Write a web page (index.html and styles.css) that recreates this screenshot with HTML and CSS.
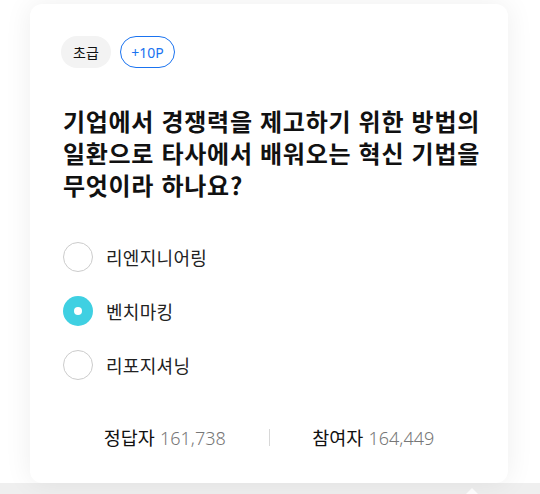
FILE: index.html
```html
<!DOCTYPE html>
<html lang="ko">
<head>
<meta charset="utf-8">
<link rel="stylesheet" href="styles.css">
</head>
<body>
<div class="page">
  <div class="card">
    <div class="chips">
      <span class="chip chip-level">초급</span>
      <span class="chip chip-point">+10P</span>
    </div>
    <h1 class="question">기업에서 경쟁력을 제고하기 위한 방법의 일환으로 타사에서 배워오는 혁신 기법을 무엇이라 하나요?</h1>
    <ul class="options">
      <li class="option"><span class="radio"></span><span class="label">리엔지니어링</span></li>
      <li class="option selected"><span class="radio"></span><span class="label">벤치마킹</span></li>
      <li class="option"><span class="radio"></span><span class="label">리포지셔닝</span></li>
    </ul>
    <div class="stats">
      <div class="stat"><span class="stat-name">정답자</span> <span class="stat-num">161,738</span></div>
      <div class="divider"></div>
      <div class="stat"><span class="stat-name">참여자</span> <span class="stat-num">164,449</span></div>
    </div>
  </div>
  <div class="strip"><span class="arrow"></span></div>
</div>
</body>
</html>
```

FILE: styles.css
```css
* { box-sizing: border-box; }
html, body { margin: 0; padding: 0; }
body {
  background: #ffffff;
  font-family: "Noto Sans CJK KR", "Noto Sans", sans-serif;
  color: #111;
  width: 540px;
  height: 494px;
  overflow: hidden;
}
.page {
  padding-top: 4px;
  position: relative;
  height: 494px;
  display: flex;
  flex-direction: column;
}
.card {
  position: relative;
  z-index: 1;
  margin-left: 30px;
  width: 478px;
  height: 479px;
  background: #fff;
  border-radius: 12px;
  box-shadow: 0 0 28px rgba(0, 0, 0, 0.07);
  padding: 32px 31px 0 31px;
}
.chips {
  display: flex;
  gap: 9px;
  height: 32px;
}
.chip {
  display: inline-flex;
  align-items: center;
  justify-content: center;
  height: 32px;
  border-radius: 16px;
  font-size: 14px;
}
.chip-level {
  width: 50px;
  background: #f3f3f3;
  color: #111;
}
.chip-point {
  width: 55px;
  border: 1px solid #1a73f0;
  color: #1a73f0;
  font-family: "Noto Sans", sans-serif;
  font-size: 14px;
}
.question {
  margin: 37px -14px 0 2px;
  font-size: 24px;
  line-height: 32px;
  font-weight: 700;
  color: #111;
  letter-spacing: 0.7px;
  word-break: keep-all;
}
.options {
  list-style: none;
  margin: 41px 0 0 2px;
  padding: 0;
  display: flex;
  flex-direction: column;
  gap: 24px;
}
.option {
  display: flex;
  align-items: center;
  height: 30px;
  gap: 13px;
}
.radio {
  width: 30px;
  height: 30px;
  border-radius: 50%;
  border: 1.5px solid #cccccc;
  flex: none;
  display: flex;
  align-items: center;
  justify-content: center;
}
.option.selected .radio {
  border: none;
  background: #3fd0e2;
}
.option.selected .radio::after {
  content: "";
  width: 8px;
  height: 8px;
  border-radius: 50%;
  background: #fff;
}
.label {
  font-size: 18px;
  letter-spacing: 0.3px;
  color: #222;
}
.stats {
  margin-top: 47px;
  display: flex;
  align-items: center;
  height: 20px;
}
.stat {
  flex: 1;
  text-align: center;
  font-size: 18.5px;
  white-space: nowrap;
}
.stat-name { color: #111; }
.stat-num {
  color: #777;
  font-family: "Noto Sans", sans-serif;
  font-weight: 300;
  font-size: 18px;
}
.divider {
  width: 1px;
  height: 17px;
  background: #d8d8d8;
  flex: none;
}
.strip {
  flex: 1;
  background: #efefef;
  position: relative;
}
.arrow {
  position: absolute;
  left: 466px;
  bottom: 0;
  width: 0;
  height: 0;
  border-left: 6px solid transparent;
  border-right: 6px solid transparent;
  border-bottom: 6px solid #fff;
}
```
